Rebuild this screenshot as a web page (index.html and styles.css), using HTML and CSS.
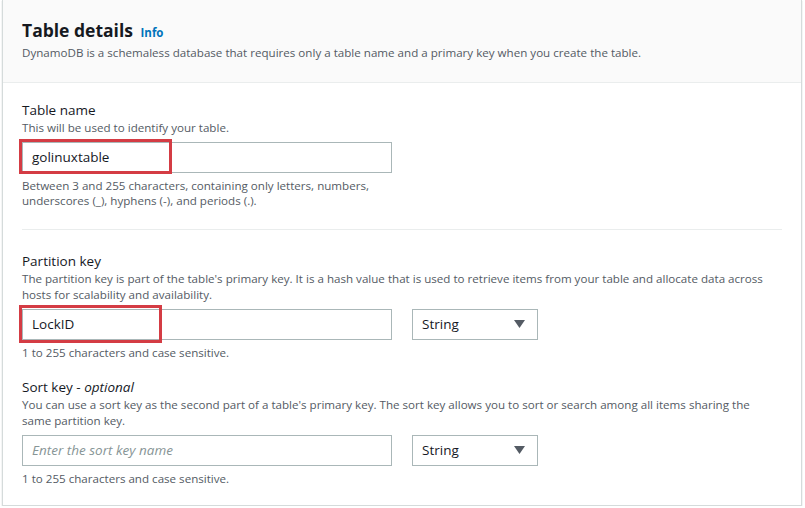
FILE: index.html
```html
<!DOCTYPE html>
<html lang="en">
<head>
<meta charset="utf-8">
<title>Table details</title>
<link rel="stylesheet" href="styles.css">
</head>
<body>
<div class="panel">
  <div class="header">
    <h2 class="title">Table details <span class="info">Info</span></h2>
    <p class="desc">DynamoDB is a schemaless database that requires only a table name and a primary key when you create the table.</p>
  </div>
  <div class="content">
    <div class="field">
      <div class="label">Table name</div>
      <div class="help">This will be used to identify your table.</div>
      <div class="control-row">
        <div class="input-wrap wide">
          <div class="input">golinuxtable</div>
          <div class="highlight hl-name"></div>
        </div>
      </div>
      <div class="constraint">Between 3 and 255 characters, containing only letters, numbers,<br>underscores (_), hyphens (-), and periods (.).</div>
    </div>
    <div class="divider"></div>
    <div class="field">
      <div class="label">Partition key</div>
      <div class="help">The partition key is part of the table's primary key. It is a hash value that is used to retrieve items from your table and allocate data across hosts for scalability and availability.</div>
      <div class="control-row">
        <div class="input-wrap">
          <div class="input">LockID</div>
          <div class="highlight hl-key"></div>
        </div>
        <div class="select"><span>String</span><svg class="caret" width="11" height="8" viewBox="0 0 11 8"><polygon points="0,0 11,0 5.5,8" fill="#545b64"/></svg></div>
      </div>
      <div class="constraint">1 to 255 characters and case sensitive.</div>
    </div>
    <div class="field sort">
      <div class="label">Sort key - <i>optional</i></div>
      <div class="help">You can use a sort key as the second part of a table's primary key. The sort key allows you to sort or search among all items sharing the same partition key.</div>
      <div class="control-row">
        <div class="input-wrap">
          <div class="input placeholder">Enter the sort key name</div>
        </div>
        <div class="select"><span>String</span><svg class="caret" width="11" height="8" viewBox="0 0 11 8"><polygon points="0,0 11,0 5.5,8" fill="#545b64"/></svg></div>
      </div>
      <div class="constraint">1 to 255 characters and case sensitive.</div>
    </div>
  </div>
</div>
</body>
</html>
```

FILE: styles.css
```css
* { box-sizing: border-box; }
body {
  margin: 0;
  background: #ffffff;
  font-family: "Open Sans", "Noto Sans", Arial, sans-serif;
  color: #16191f;
}
.panel {
  margin-left: 2px;
  width: 800px;
  border: 1px solid #d5dbdb;
  border-top: none;
  box-shadow: 0 1px 1px rgba(0, 28, 36, 0.25);
  background: #ffffff;
}
.header {
  background: #fafafa;
  border-bottom: 1px solid #eaeded;
  height: 83px;
  padding: 18px 19px 0 19px;
}
.title {
  margin: 0;
  font-size: 17.5px;
  font-weight: 700;
  line-height: 24px;
  color: #16191f;
}
.info {
  font-size: 11.5px;
  font-weight: 700;
  color: #0073bb;
  margin-left: 3px;
}
.desc {
  margin: 0;
  font-size: 11.6px;
  line-height: 16px;
  color: #545b64;
}
.content {
  padding: 18px 19px 19px 19px;
}
.label {
  font-size: 13.5px;
  line-height: 18px;
  color: #16191f;
}
.help {
  font-size: 11.6px;
  line-height: 16.5px;
  color: #545b64;
  margin-top: 1px;
  max-width: 750px;
}
.control-row {
  display: flex;
  gap: 20px;
  margin-top: 5px;
}
.input-wrap {
  position: relative;
  width: 370px;
}
.input {
  height: 31px;
  border: 1px solid #aab7b8;
  padding: 0 9px;
  font-size: 13.5px;
  line-height: 29px;
  color: #16191f;
  background: #ffffff;
}
.input.placeholder {
  font-style: italic;
  color: #879596;
}
.highlight {
  position: absolute;
  border: 3px solid #d43c44;
  pointer-events: none;
}
.hl-name { left: -3px; top: -3px; width: 153px; height: 35px; }
.hl-key { left: -3px; top: -4px; width: 143px; height: 38px; }
.select {
  width: 126px;
  height: 31px;
  border: 1px solid #aab7b8;
  padding: 0 12px 0 9px;
  display: flex;
  align-items: center;
  justify-content: space-between;
  font-size: 13.5px;
  color: #16191f;
}
.caret { display: block; }
.constraint {
  margin-top: 5px;
  font-size: 11.6px;
  line-height: 15px;
  color: #545b64;
}
.divider {
  height: 1px;
  background: #eaeded;
  margin: 21px 0 22px 0;
}
.sort { margin-top: 18px; }
```
